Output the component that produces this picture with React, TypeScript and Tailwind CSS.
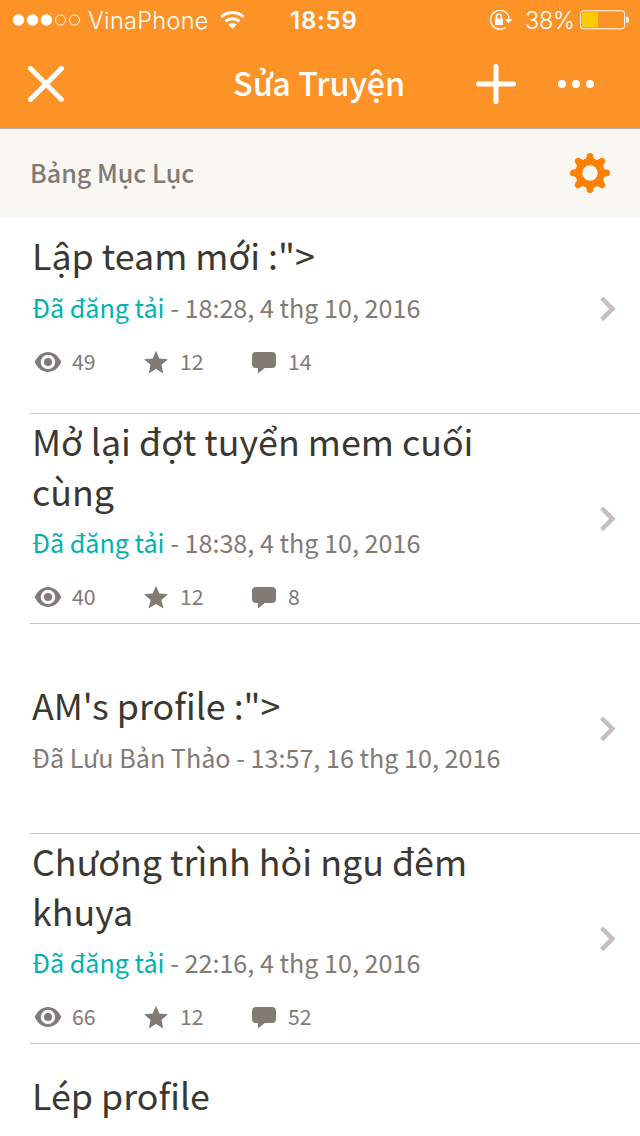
import React from 'react';

interface Chapter {
  id: number;
  title: string[];
  published?: boolean;
  date?: string;
  stats?: { views: number; votes: number; comments: number };
  padding: string;
}

const CHAPTERS: Chapter[] = [
  { id: 1, title: ['Lập team mới :">'], published: true, date: '18:28, 4 thg 10, 2016', stats: { views: 49, votes: 12, comments: 14 }, padding: 'pt-[25px]' },
  { id: 2, title: ['Mở lại đợt tuyển mem cuối', 'cùng'], published: true, date: '18:38, 4 thg 10, 2016', stats: { views: 40, votes: 12, comments: 8 }, padding: 'pt-px' },
  { id: 3, title: ['AM\'s profile :">'], published: false, date: '13:57, 16 thg 10, 2016', padding: 'pt-[55px]' },
  { id: 4, title: ['Chương trình hỏi ngu đêm', 'khuya'], published: true, date: '22:16, 4 thg 10, 2016', stats: { views: 66, votes: 12, comments: 52 }, padding: 'pt-px' },
  { id: 5, title: ['Lép profile'], padding: 'pt-[25px]' },
];

const EyeIcon = () => (
  <svg width="28" height="24" viewBox="0 0 28 24" fill="#827a75">
    <path fillRule="evenodd" d="M.7 12C3.6 5.6 8.6 2 14 2s10.400 3.600 13.300 10c-2.900 6.400-7.900 10-13.300 10S3.600 18.400.7 12ZM14 4.800a7.300 7.200 0 1 0 0 14.400a7.300 7.200 0 1 0 0-14.400Z" />
    <circle cx="14" cy="12" r="4" />
  </svg>
);

const StarIcon = () => (
  <svg width="28" height="24" viewBox="0 0 28 24" fill="#827a75">
    <path d="M14 .7l3.300 7.900 8.600.7-6.500 5.600 2 8.700-7.400-4.700-7.400 4.700 2-8.700L2.100 9.300l8.600-.7z" />
  </svg>
);

const CommentIcon = () => (
  <svg width="28" height="24" viewBox="0 0 28 24" fill="#827a75">
    <path d="M6 2h16a4 4 0 0 1 4 4v8a4 4 0 0 1-4 4h-7.300L8 23.600V18H6a4 4 0 0 1-4-4V6a4 4 0 0 1 4-4z" />
  </svg>
);

const TOOTH = 'M-7-11Q-3.400-13.500-3.300-17.300Q-3.100-20 0-20Q3.100-20 3.300-17.300Q3.400-13.500 7-11Z';

const GearIcon = () => (
  <svg className="-mt-px" width="40" height="40" viewBox="-20 -20 40 40" fill="#ff8000">
    {[0, 45, 90, 135, 180, 225, 270, 315].map(a => (
      <path key={a} d={TOOTH} transform={`rotate(${a})`} />
    ))}
    <circle r="11.200" fill="none" stroke="#ff8000" strokeWidth="7" />
  </svg>
);

const StatusBar = () => (
  <div className="h-10 flex items-center font-['Inter',sans-serif] text-white">
    <svg className="ml-3" width="70" height="14" viewBox="0 0 70 14" fill="#fff">
      <circle cx="6.500" cy="7" r="5.700" />
      <circle cx="20.500" cy="7" r="5.700" />
      <circle cx="34.500" cy="7" r="5.700" />
      <circle cx="48.500" cy="7" r="5" fill="none" stroke="#fff" />
      <circle cx="62.500" cy="7" r="5" fill="none" stroke="#fff" />
    </svg>
    <span className="ml-[6px] w-[132px] pt-px text-[23.5px] tracking-[0.3px] font-light whitespace-nowrap">VinaPhone</span>
    <svg width="26" height="20" viewBox="0 0 26 20" fill="none" stroke="#fff" strokeWidth="3">
      <path d="M1.500 7a16 16 0 0 1 22 0" />
      <path d="M5.600 11.400a10 10 0 0 1 13.800 0" />
      <path d="M12.500 18.800L8.300 14.600a6 6 0 0 1 8.400 0z" fill="#fff" stroke="none" />
    </svg>
    <span className="ml-[44px] w-[198px] pt-px text-[24px] tracking-[0.8px] font-semibold">18:59</span>
    <svg width="26" height="24" viewBox="0 0 26 24" fill="none" stroke="#fff" strokeWidth="1.300">
      <path d="M20.300 7.200A9.500 9.500 0 1 0 18.200 19" />
      <path d="M20.300 7.200Q21 9 21 11.500" />
      <path d="M16.800 11h7.600l-3.800 4.300z" fill="#fff" stroke="none" />
      <path d="M7 10.500h8v6.500H7z" fill="#fff" stroke="none" />
      <path d="M8.500 11V8.500a2.500 2.500 0 0 1 5 0V11" strokeWidth="1.500" />
    </svg>
    <span className="ml-[11px] w-[55px] pt-px text-[23.5px] tracking-[-0.3px] font-light">38%</span>
    <svg width="50" height="20" viewBox="0 0 50 20">
      <rect x=".6" y=".8" width="44" height="18" rx="2.500" fill="none" stroke="#fff" />
      <rect x="2" y="2.300" width="16" height="15" fill="#ffcc00" />
      <path d="M46.300 6.500q2.700 0 2.700 3.300t-2.700 3.300z" fill="#fff" />
    </svg>
  </div>
);

const NavBar = () => (
  <div className="h-[88px] flex items-center pl-7 text-white">
    <svg width="36" height="36" viewBox="0 0 36 36" stroke="#fff" strokeWidth="5" strokeLinecap="round">
      <path d="M2.500 2.500l31 31M33.500 2.500l-31 31" />
    </svg>
    <h1 className="ml-[169px] w-[243px] pb-[4px] text-[32.3px] leading-[48px] font-medium whitespace-nowrap">Sửa Truyện</h1>
    <svg width="40" height="40" viewBox="0 0 40 40" stroke="#fff" strokeWidth="5" strokeLinecap="round">
      <path d="M20 2.500v35M2.500 20h35" />
    </svg>
    <svg className="ml-[42px]" width="36" height="8" viewBox="0 0 36 8" fill="#fff">
      <circle cx="4" cy="4" r="4" />
      <circle cx="18" cy="4" r="4" />
      <circle cx="32" cy="4" r="4" />
    </svg>
  </div>
);

const Stat = ({ icon, value }: { icon: React.ReactNode; value: number }) => (
  <div className="w-[108px] flex items-center">
    {icon}
    <span className="ml-[10px] -mt-[2px] text-[21.3px] leading-6">{value}</span>
  </div>
);

const ChapterRow = ({ chapter }: { chapter: Chapter }) => (
  <li className="h-[210px] ml-[30px] flex items-stretch border-b border-[#c8c7cc] shrink-0">
    <div className={`flex-1 pl-[2px] ${chapter.padding}`}>
      <h2 className="text-[35.8px] leading-[50px] text-[#3b3832] whitespace-nowrap">
        {chapter.title.map(line => (
          <span key={line} className="block">{line}</span>
        ))}
      </h2>
      {chapter.date && (
        <p className={`${chapter.title.length > 1 ? 'mt-[9px]' : 'mt-[10px]'} text-[25.15px] leading-9 whitespace-nowrap`}>
          {chapter.published
            ? <span className="text-[#00b2b2]">Đã đăng tải</span>
            : <span>Đã Lưu Bản Thảo</span>}
          {' - '}{chapter.date}
        </p>
      )}
      {chapter.stats && (
        <div className="flex mt-[25px] pl-[2px]">
          <Stat icon={<EyeIcon />} value={chapter.stats.views} />
          <Stat icon={<StarIcon />} value={chapter.stats.votes} />
          <Stat icon={<CommentIcon />} value={chapter.stats.comments} />
        </div>
      )}
    </div>
    <div className="w-[41px] flex items-center">
      <svg width="18" height="26" viewBox="0 0 18 26" fill="none" stroke="#c6c0bc" strokeWidth="4.500">
        <path d="M2.700 2l10.700 10.800L2.700 23.600" />
      </svg>
    </div>
  </li>
);

const App: React.FC = () => {
  return (
    <div className="w-[640px] h-[1136px] overflow-hidden bg-white flex flex-col font-['Noto_Sans_CJK_SC',sans-serif] text-[#827a75]">
      <header className="bg-[#fd9226] h-[129px] border-b border-[#b5b3a5] shrink-0">
        <StatusBar />
        <NavBar />
      </header>
      <div className="h-[89px] bg-[#f8f7f2] flex items-center justify-between pl-[30px] pr-[30px] shrink-0">
        <div className="h-[30px] overflow-hidden text-[25.1px] leading-[26px] font-medium">Bảng Mục Lục</div>
        <GearIcon />
      </div>
      {/* the first row starts slightly under the section header */}
      <div className="flex-1 overflow-hidden">
        <ul className="-mt-[14px] flex flex-col">
          {CHAPTERS.map(c => <ChapterRow key={c.id} chapter={c} />)}
        </ul>
      </div>
    </div>
  );
};

export default App;
